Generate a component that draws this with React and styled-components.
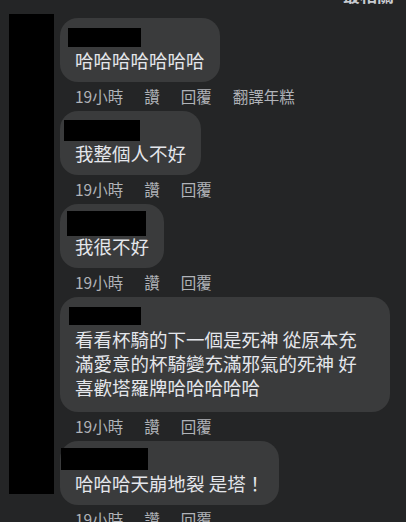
import styled, { createGlobalStyle } from "styled-components";

const GlobalStyle = createGlobalStyle`
  html, body {
    margin: 0;
    padding: 0;
    overflow: hidden;
    background: #242526;
  }
  body {
    font-family: "Noto Sans CJK TC", "Noto Sans", sans-serif;
  }
`;

const Page = styled.div`
  width: 406px;
  height: 522px;
  background: #242526;
  overflow: hidden;
`;

const Header = styled.div`
  height: 14px;
  display: flex;
  justify-content: flex-end;
  align-items: flex-end;
  padding-right: 12px;
  overflow: hidden;
`;

const SortLabel = styled.span`
  font-size: 17px;
  line-height: 20px;
  margin-bottom: 9px;
  font-weight: 600;
  color: #c9ccd1;
`;

const Body = styled.div`
  display: flex;
  padding-left: 9px;
`;

const AvatarMask = styled.div`
  width: 45px;
  height: 480px;
  flex-shrink: 0;
  background: #000;
`;

const List = styled.div`
  flex: 1;
  display: flex;
  flex-direction: column;
  margin-left: 6px;
  padding: 4px 16px 0 0;
`;

const Comment = styled.div`
  display: flex;
  flex-direction: column;
  align-items: flex-start;
`;

const Bubble = styled.div`
  position: relative;
  align-self: ${(p) => (p.$full ? "stretch" : "flex-start")};
  background: #3a3b3c;
  border-radius: 18px;
  padding: 9px 15px ${(p) => (p.$full ? "13px" : "10px")} 15px;
`;

const NameSpace = styled.div`
  height: 21px;
`;

const NameMask = styled.div`
  position: absolute;
  background: #000;
`;

const Text = styled.div`
  font-size: 18.5px;
  line-height: 24px;
  color: #e4e6eb;
  white-space: nowrap;
`;

const Meta = styled.div`
  box-sizing: border-box;
  display: flex;
  gap: 21px;
  height: 29px;
  align-items: center;
  padding: 0 0 2px 15px;
  font-size: 15.5px;
  color: #b0b3b8;
`;

const comments = [
  { mask: [8, 10, 73, 19], lines: ["哈哈哈哈哈哈哈"], translate: true },
  { mask: [4, 9, 76, 21], lines: ["我整個人不好"] },
  { mask: [7, 7, 79, 25], lines: ["我很不好"] },
  {
    mask: [9, 10, 72, 18],
    lines: [
      "看看杯騎的下一個是死神 從原本充",
      "滿愛意的杯騎變充滿邪氣的死神 好",
      "喜歡塔羅牌哈哈哈哈哈",
    ],
    full: true,
  },
  { mask: [1, 7, 87, 22], lines: ["哈哈哈天崩地裂 是塔！"] },
];

export default function App() {
  return (
    <Page>
      <GlobalStyle />
      <Header>
        <SortLabel>最相關</SortLabel>
      </Header>
      <Body>
        <AvatarMask />
        <List>
          {comments.map((c, i) => (
            <Comment key={i}>
              <Bubble $full={c.full}>
                <NameMask
                  style={{
                    left: c.mask[0],
                    top: c.mask[1],
                    width: c.mask[2],
                    height: c.mask[3],
                  }}
                />
                <NameSpace />
                <Text>
                  {c.lines.map((l, j) => (
                    <div key={j}>{l}</div>
                  ))}
                </Text>
              </Bubble>
              <Meta>
                <span>19小時</span>
                <span>讚</span>
                <span>回覆</span>
                {c.translate && <span>翻譯年糕</span>}
              </Meta>
            </Comment>
          ))}
        </List>
      </Body>
    </Page>
  );
}
